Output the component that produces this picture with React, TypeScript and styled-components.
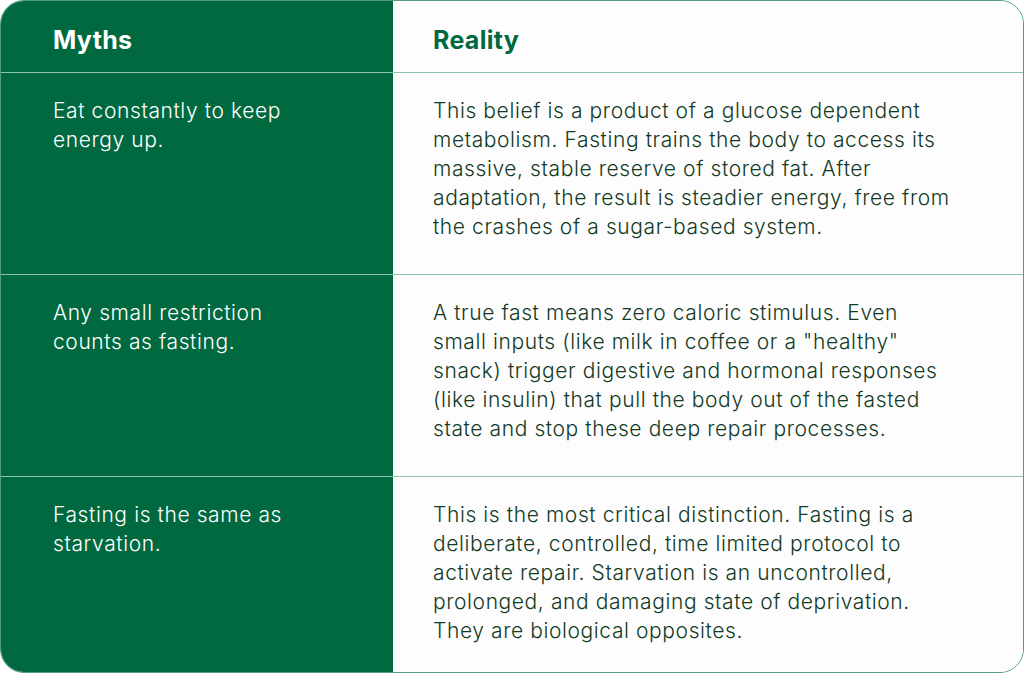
import styled, { createGlobalStyle } from "styled-components";

const GlobalStyle = createGlobalStyle`
  html, body {
    margin: 0;
    padding: 0;
    background: #ffffff;
  }
  * {
    box-sizing: border-box;
  }
`;

const Card = styled.div`
  width: 1024px;
  height: 673px;
  border: 1px solid #4f9d7a;
  border-radius: 24px;
  overflow: hidden;
  display: grid;
  grid-template-columns: 392px 1fr;
  grid-template-rows: 72px 202px 202px 1fr;
  background: #fdfdfd;
  font-family: Inter, "Liberation Sans", sans-serif;
`;

const Cell = styled.div<{ myth?: boolean; last?: boolean }>`
  background: ${(p) => (p.myth ? "#006940" : "#fdfdfd")};
  color: ${(p) => (p.myth ? "#ffffff" : "#123a24")};
  border-bottom: ${(p) => (p.last ? "none" : "1px solid #8cc4a6")};
  padding: ${(p) => (p.myth ? "23px 80px 0 52px" : "23px 68px 0 40px")};
  font-size: 21px;
  font-weight: 350;
  line-height: 29px;
  letter-spacing: 0.6px;
`;

const HeadCell = styled.div<{ myth?: boolean }>`
  background: ${(p) => (p.myth ? "#006940" : "#fdfdfd")};
  color: ${(p) => (p.myth ? "#ffffff" : "#006940")};
  border-bottom: 1px solid #8cc4a6;
  display: flex;
  align-items: center;
  padding: 6px 0 0 ${(p) => (p.myth ? "52px" : "40px")};
  font-size: 25px;
  font-weight: 700;
  letter-spacing: 0.3px;
`;

const rows = [
  {
    myth: "Eat constantly to keep energy up.",
    reality:
      "This belief is a product of a glucose dependent metabolism. Fasting trains the body to access its massive, stable reserve of stored fat. After adaptation, the result is steadier energy, free from the crashes of a sugar-based system.",
  },
  {
    myth: "Any small restriction counts as fasting.",
    reality:
      'A true fast means zero caloric stimulus. Even small inputs (like milk in coffee or a "healthy" snack) trigger digestive and hormonal responses (like insulin) that pull the body out of the fasted state and stop these deep repair processes.',
  },
  {
    myth: "Fasting is the same as starvation.",
    reality:
      "This is the most critical distinction. Fasting is a deliberate, controlled, time limited protocol to activate repair. Starvation is an uncontrolled, prolonged, and damaging state of deprivation. They are biological opposites.",
  },
];

const App = () => {
  return (
    <>
      <GlobalStyle />
      <Card>
        <HeadCell myth>Myths</HeadCell>
        <HeadCell>Reality</HeadCell>
        {rows.map((row, i) => [
          <Cell key={"m" + i} myth last={i === rows.length - 1}>
            {row.myth}
          </Cell>,
          <Cell key={"r" + i} last={i === rows.length - 1}>
            {row.reality}
          </Cell>,
        ])}
      </Card>
    </>
  );
};

export default App;
